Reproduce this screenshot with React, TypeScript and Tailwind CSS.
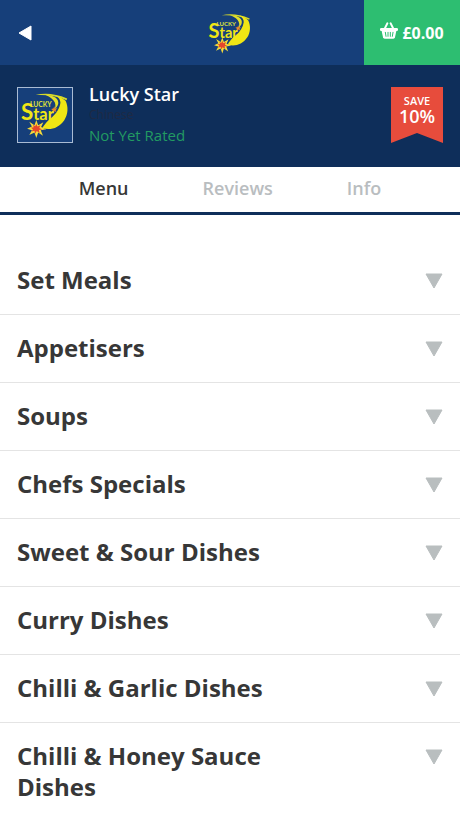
const categories = [
  "Set Meals",
  "Appetisers",
  "Soups",
  "Chefs Specials",
  "Sweet & Sour Dishes",
  "Curry Dishes",
  "Chilli & Garlic Dishes",
  "Chilli & Honey Sauce Dishes",
];

function Logo({ className }: { className: string }) {
  return (
    <svg viewBox="0 0 168 168" className={className} role="img" aria-label="Lucky Star logo">
      <path d="M55 22C82 15 116 17 153 33L151 38C119 24 88 20 55 22Z" fill="#d6d92a" />
      <path
        d="M118 23C128 30 132 38 132 46C130 62 120 80 102 94C92 102 84 112 76 124C98 134 128 124 144 100C156 82 157 58 148 40C140 32 130 26 118 23Z"
        fill="#f0e614"
      />
      <path d="M84 21C116 22 128 36 125 50C123 57 119 62 114 66C119 54 120 36 84 21Z" fill="#e3e02a" />
      <path
        d="M113 57L115 64L122 63L117 69L120 75L113 72L107 76L108 69L103 65L110 64Z"
        fill="#f08a24"
      />
      <text x="37" y="58" fontSize="21" fontWeight="700" fill="#dfe03a" fontFamily="Lato, sans-serif">
        LUCKY
      </text>
      <text x="9" y="101" fontSize="70" fontWeight="700" fill="#f0e614" fontFamily="Lato, sans-serif">
        S
        <tspan fontSize="51">tar</tspan>
      </text>
      <g transform="translate(57 127) scale(1.15) translate(-57 -128)">
        <path
          d="M57 104L62 118L76 110L70 123L84 129L69 132L75 147L62 138L57 153L52 138L38 145L45 132L32 128L45 122L38 109L52 118Z"
          fill="#f5dc3a"
        />
        <path
          d="M57 114L60 122L68 118L65 126L73 130L64 131L66 139L58 134L54 141L52 133L44 135L48 129L42 125L50 124L48 117L54 121Z"
          fill="#e5452d"
        />
      </g>
    </svg>
  );
}

function Basket() {
  return (
    <svg viewBox="0 0 54 51" className="-mt-1 h-[17px] w-[18px]" aria-hidden="true">
      <path d="M13 22L22 4M41 22L32 4" stroke="#fff" strokeWidth="6" strokeLinecap="round" />
      <rect x="0" y="18" width="54" height="9" rx="4" fill="#fff" />
      <path d="M5 27H49L45 46Q44 50 40 50H14Q10 50 9 46Z" fill="#fff" />
      <path d="M16 31L18 43M24 31V43M31 31V43M39 31L37 43" stroke="#2dbe71" strokeWidth="3" strokeLinecap="round" />
    </svg>
  );
}

export default function App() {
  return (
    <div className="min-h-screen bg-white font-['Open_Sans','Noto_Sans',sans-serif] text-[#373737]">
      <header className="grid h-[65px] grid-cols-[1fr_auto_1fr] bg-[#163f7a]">
        <button type="button" aria-label="Back" className="flex items-center pl-[18px]">
          <svg viewBox="0 0 14 16" className="h-4 w-[14px]" aria-hidden="true">
            <path d="M1 8L13 1V15Z" fill="#fff" stroke="#fff" strokeLinejoin="round" />
          </svg>
        </button>
        <div className="flex items-center">
          <Logo className="size-12" />
        </div>
        <button
          type="button"
          aria-label="Basket, £0.00"
          className="flex w-24 items-center justify-center gap-1 justify-self-end bg-[#2dbe71] text-base font-bold text-white"
        >
          <Basket />
          <span>£0.00</span>
        </button>
      </header>

      <section className="flex h-[102px] items-start bg-[#0e2e5a] px-[17px] pt-[22px]">
        <Logo className="size-14 shrink-0 border border-[#a9bbd3] bg-[#163f7a]" />
        <div className="-mt-1 ml-4 flex-1">
          <h1 className="text-lg leading-[22px] font-semibold text-white">Lucky Star</h1>
          <p className="text-xs leading-5 text-[#1e2a44]">Chinese</p>
          <p className="text-[15px] leading-5 font-medium text-[#229b62]">Not Yet Rated</p>
        </div>
        <div className="flex h-14 w-[52px] flex-col items-center bg-[#e74c3c] pt-2 text-white [clip-path:polygon(0_0,100%_0,100%_100%,50%_82%,0_100%)]">
          <span className="text-[11px] leading-3 font-semibold">SAVE</span>
          <span className="text-lg leading-[18px] font-semibold">10%</span>
        </div>
      </section>

      <nav className="flex h-12 items-center justify-center gap-[74px] border-b-[3px] border-[#0e2e5a] pb-1 text-lg font-semibold text-[#b9bdc0]">
        <button type="button" aria-current="page" className="text-[#373737]">
          Menu
        </button>
        <button type="button">Reviews</button>
        <button type="button">Info</button>
      </nav>

      <main className="pt-8">
        {categories.map((name) => (
          <h2 key={name} className="border-b border-[#e4e4e4]">
            <button type="button" className="flex w-full items-start justify-between px-[17px] pt-[17px] pb-[19px] text-left">
              <span className="max-w-[290px] text-2xl leading-[31px] font-bold">{name}</span>
              <svg viewBox="0 0 18 16" className="mt-[9px] h-4 w-[18px] shrink-0" aria-hidden="true">
                <path d="M1 1H17L9 15Z" fill="#b9bebf" stroke="#b9bebf" strokeLinejoin="round" />
              </svg>
            </button>
          </h2>
        ))}
      </main>
    </div>
  );
}
